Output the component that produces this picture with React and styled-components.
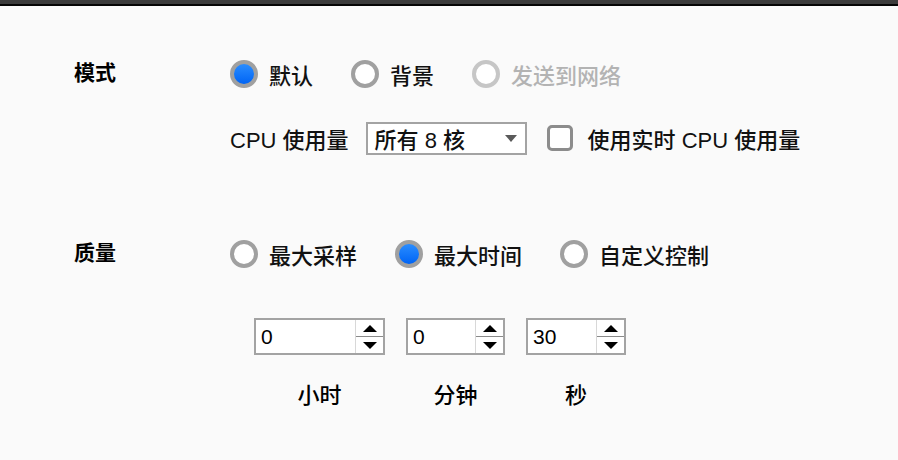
import styled, { createGlobalStyle } from "styled-components";

const GlobalStyle = createGlobalStyle`
  body {
    margin: 0;
    background: #fafafa;
    font-family: "Liberation Sans", "Noto Sans CJK SC", sans-serif;
    color: #111;
  }
`;

const TitleBar = styled.div`
  height: 4px;
  background: #3c3c3c;
  border-bottom: 2px solid #050505;
`;

const Content = styled.div`
  padding: 51px 0 40px 74px;
`;

const Section = styled.section`
  display: grid;
  grid-template-columns: 156px auto;
  margin-top: ${(p) => p.$gap || 0}px;
`;

const SectionLabel = styled.div`
  height: 34px;
  display: flex;
  align-items: center;
  margin-top: -3px;
  font-size: 21px;
  font-weight: 700;
  color: #000;
`;

const Controls = styled.div`
  display: flex;
  flex-direction: column;
`;

const Line = styled.div`
  height: 34px;
  display: flex;
  align-items: center;
  margin-top: ${(p) => p.$gap || 0}px;
  font-size: 22px;
  font-weight: 500;
`;

const Option = styled.label`
  display: flex;
  align-items: center;
  gap: 11px;
  margin-right: 38px;
  color: ${(p) => (p.$disabled ? "#b3b3b3" : "#111")};
`;

const RadioDot = styled.span`
  width: 20px;
  height: 20px;
  border-radius: 50%;
  border: 4px solid ${(p) => (p.$disabled ? "#c6c6c6" : "#a0a0a0")};
  background: ${(p) =>
    p.$checked ? "linear-gradient(#2a8dff, #0064f5)" : "#fff"};
`;

const Text = styled.span`
  white-space: nowrap;
`;

const Select = styled.div`
  width: 142px;
  height: 29px;
  margin-left: 17px;
  border: 2px solid #a3a3a3;
  background: #fff;
  display: flex;
  align-items: center;
  justify-content: space-between;
  padding: 0 8px 0 7px;
`;

const CheckBox = styled.span`
  width: 20px;
  height: 20px;
  margin-left: 20px;
  margin-right: 15px;
  border: 3px solid #8c8c8c;
  border-radius: 5px;
  background: #fff;
`;

const SpinnerRow = styled.div`
  display: flex;
  gap: 21px;
  margin-top: 47px;
  padding-left: 24px;
`;

const Field = styled.div`
  display: flex;
  flex-direction: column;
  align-items: center;
  gap: 23px;
`;

const Spinner = styled.div`
  width: ${(p) => p.$width}px;
  height: 33px;
  border: 2px solid #a3a3a3;
  background: #fff;
  display: flex;
`;

const SpinValue = styled.div`
  flex: 1;
  display: flex;
  align-items: center;
  padding-left: 5px;
  font-size: 21px;
  color: #000;
`;

const Stepper = styled.div`
  width: 27px;
  display: flex;
  flex-direction: column;
  border-left: 1px solid #d8d8d8;
`;

const StepHalf = styled.div`
  flex: 1;
  display: flex;
  align-items: center;
  justify-content: center;
  border-bottom: ${(p) => (p.$top ? "1px solid #8a8a8a" : "none")};
`;

const FieldLabel = styled.div`
  height: 30px;
  display: flex;
  align-items: center;
  font-size: 22px;
  font-weight: 500;
  color: #000;
`;

function Triangle({ down, color = "#000", w = 14, h = 7 }) {
  return (
    <svg width={w} height={h} viewBox={`0 0 ${w} ${h}`}>
      <polygon
        points={down ? `0,0 ${w},0 ${w / 2},${h}` : `0,${h} ${w},${h} ${w / 2},0`}
        fill={color}
      />
    </svg>
  );
}

function Radio({ label, checked, disabled }) {
  return (
    <Option $disabled={disabled}>
      <RadioDot $checked={checked} $disabled={disabled} />
      <Text>{label}</Text>
    </Option>
  );
}

function NumberBox({ value, width, label }) {
  return (
    <Field>
      <Spinner $width={width}>
        <SpinValue>{value}</SpinValue>
        <Stepper>
          <StepHalf $top>
            <Triangle />
          </StepHalf>
          <StepHalf>
            <Triangle down />
          </StepHalf>
        </Stepper>
      </Spinner>
      <FieldLabel>{label}</FieldLabel>
    </Field>
  );
}

export default function App() {
  return (
    <>
      <GlobalStyle />
      <TitleBar />
      <Content>
        <Section>
          <SectionLabel>模式</SectionLabel>
          <Controls>
            <Line>
              <Radio label="默认" checked />
              <Radio label="背景" />
              <Radio label="发送到网络" disabled />
            </Line>
            <Line $gap={30}>
              <Text>CPU 使用量</Text>
              <Select>
                <Text>所有 8 核</Text>
                <Triangle down color="#5a5a5a" w={12} h={7} />
              </Select>
              <CheckBox />
              <Text>使用实时 CPU 使用量</Text>
            </Line>
          </Controls>
        </Section>
        <Section $gap={82}>
          <SectionLabel>质量</SectionLabel>
          <Controls>
            <Line>
              <Radio label="最大采样" />
              <Radio label="最大时间" checked />
              <Radio label="自定义控制" />
            </Line>
            <SpinnerRow>
              <NumberBox value="0" width={127} label="小时" />
              <NumberBox value="0" width={95} label="分钟" />
              <NumberBox value="30" width={96} label="秒" />
            </SpinnerRow>
          </Controls>
        </Section>
      </Content>
    </>
  );
}
